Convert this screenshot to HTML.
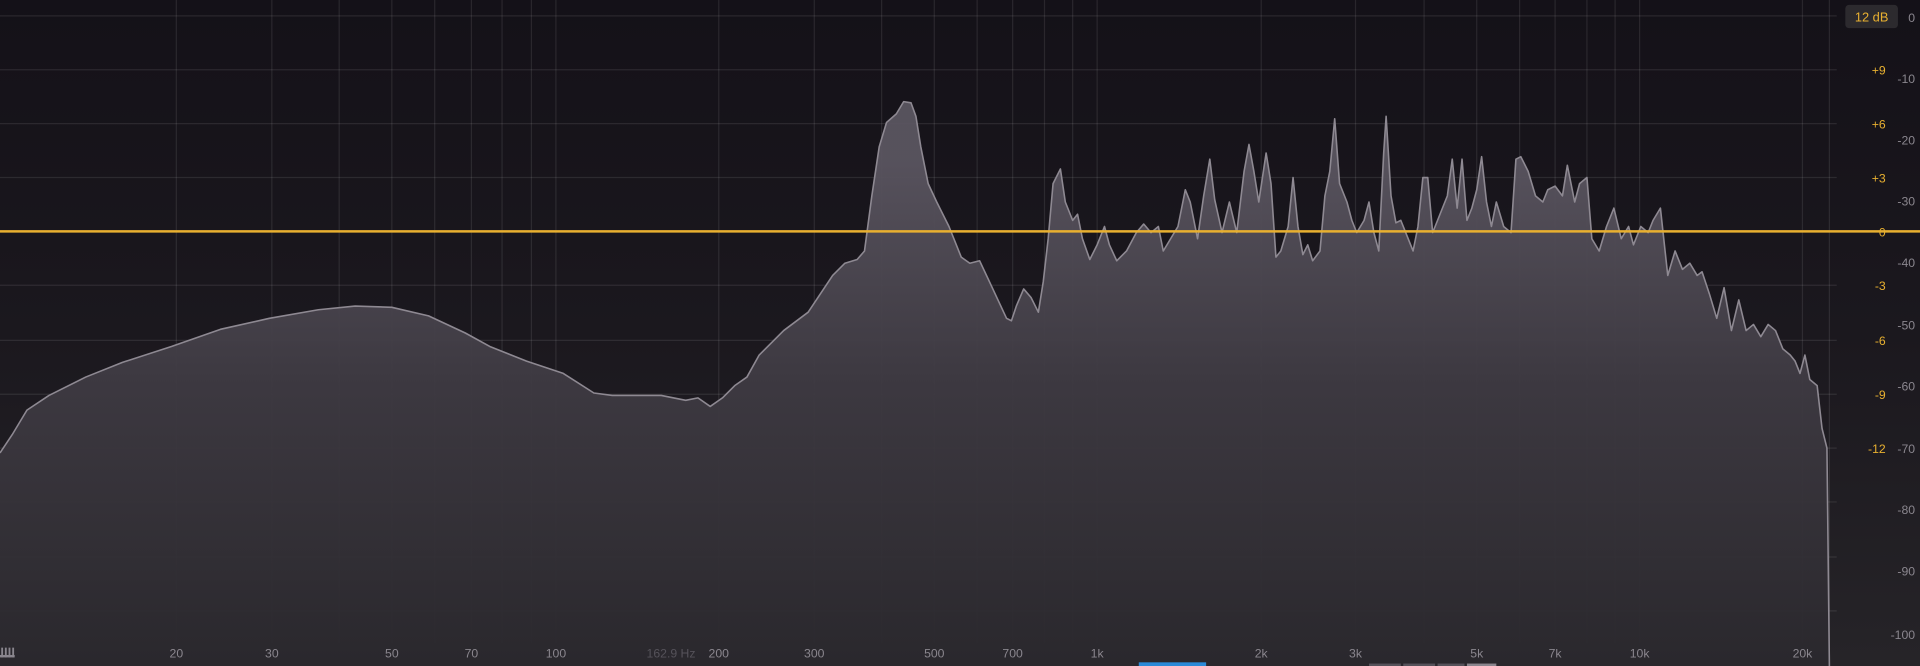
<!DOCTYPE html>
<html><head><meta charset="utf-8"><style>
html,body{margin:0;padding:0;background:#141117;overflow:hidden}
svg{display:block}
text{font-family:"Liberation Sans",sans-serif}
</style></head><body>
<svg width="1920" height="666" viewBox="0 0 1568 544" preserveAspectRatio="none">
<defs>
<linearGradient id="bg" x1="0" y1="0" x2="0" y2="1">
<stop offset="0" stop-color="#141118"/><stop offset="0.5" stop-color="#1b181e"/><stop offset="1" stop-color="#262428"/>
</linearGradient>
<linearGradient id="fl" x1="0" y1="0" x2="0" y2="1">
<stop offset="0.1" stop-color="#5a5560"/><stop offset="0.5" stop-color="#3e3a42"/><stop offset="1" stop-color="#2a282d"/>
</linearGradient>
</defs>
<rect width="1568" height="544" fill="url(#bg)"/>
<g stroke="#ffffff" stroke-opacity="0.09" stroke-width="1">
<line x1="0" y1="13" x2="1500" y2="13"/><line x1="0" y1="57" x2="1500" y2="57"/><line x1="0" y1="101" x2="1500" y2="101"/><line x1="0" y1="145" x2="1500" y2="145"/><line x1="0" y1="233" x2="1500" y2="233"/><line x1="0" y1="278" x2="1500" y2="278"/><line x1="0" y1="322" x2="1500" y2="322"/><line x1="0" y1="366" x2="1500" y2="366"/><line x1="0" y1="410" x2="1500" y2="410"/><line x1="0" y1="455" x2="1500" y2="455"/><line x1="0" y1="499" x2="1500" y2="499"/>
<line x1="144" y1="0" x2="144" y2="525"/><line x1="222" y1="0" x2="222" y2="525"/><line x1="277" y1="0" x2="277" y2="525"/><line x1="320" y1="0" x2="320" y2="525"/><line x1="355" y1="0" x2="355" y2="525"/><line x1="385" y1="0" x2="385" y2="525"/><line x1="410" y1="0" x2="410" y2="525"/><line x1="434" y1="0" x2="434" y2="525"/><line x1="454" y1="0" x2="454" y2="525"/>
<line x1="587" y1="0" x2="587" y2="525"/><line x1="665" y1="0" x2="665" y2="525"/><line x1="720" y1="0" x2="720" y2="525"/><line x1="763" y1="0" x2="763" y2="525"/><line x1="798" y1="0" x2="798" y2="525"/><line x1="827" y1="0" x2="827" y2="525"/><line x1="853" y1="0" x2="853" y2="525"/><line x1="876" y1="0" x2="876" y2="525"/><line x1="896" y1="0" x2="896" y2="525"/>
<line x1="1030" y1="0" x2="1030" y2="525"/><line x1="1107" y1="0" x2="1107" y2="525"/><line x1="1163" y1="0" x2="1163" y2="525"/><line x1="1206" y1="0" x2="1206" y2="525"/><line x1="1241" y1="0" x2="1241" y2="525"/><line x1="1270" y1="0" x2="1270" y2="525"/><line x1="1296" y1="0" x2="1296" y2="525"/><line x1="1319" y1="0" x2="1319" y2="525"/><line x1="1339" y1="0" x2="1339" y2="525"/>
<line x1="1472" y1="0" x2="1472" y2="525"/><line x1="1494" y1="0" x2="1494" y2="544"/>
</g>
<polygon fill="url(#fl)" fill-opacity="0.95" points="0,544 0,370 10,355 22,335 40,323 70,308 100,296 140,283 180,269 220,260 260,253 290,250 320,251 350,258 380,272 400,283 430,295 460,305 485,321 500,323 540,323 560,327 570,325 580,332 590,325 600,315 610,308 620,290 640,270 660,255 670,240 680,225 690,215 700,212 706,205 712,160 718,120 724,100 732,93 738,83 744,84 748,95 752,120 758,150 765,165 775,185 785,210 792,215 800,213 808,230 815,245 822,260 826,262 830,250 836,236 842,243 848,255 852,230 856,195 860,150 866,138 870,165 876,180 880,175 884,195 890,212 896,200 902,185 906,200 912,213 920,205 928,190 934,183 940,190 946,185 950,205 956,195 962,185 968,155 972,165 978,195 983,160 988,130 992,163 998,190 1004,165 1010,190 1016,140 1020,118 1024,140 1028,165 1034,125 1038,150 1042,210 1046,205 1052,185 1056,145 1060,185 1064,208 1068,200 1072,213 1078,205 1082,160 1086,140 1090,97 1094,150 1100,165 1104,180 1108,190 1114,180 1118,165 1122,190 1126,205 1130,125 1132,95 1136,160 1140,182 1144,180 1150,195 1154,205 1158,185 1162,145 1166,145 1170,190 1174,180 1178,170 1182,160 1186,130 1190,170 1194,130 1198,180 1202,170 1206,155 1210,128 1214,165 1218,185 1222,165 1228,185 1234,190 1238,130 1242,128 1248,140 1254,160 1260,165 1264,155 1270,152 1276,160 1280,135 1286,165 1290,150 1296,145 1300,195 1306,205 1312,185 1318,170 1324,195 1330,185 1334,200 1340,185 1346,190 1350,180 1356,170 1362,225 1368,205 1374,220 1380,215 1386,225 1390,222 1396,240 1402,260 1408,235 1414,270 1420,245 1426,270 1432,265 1438,275 1444,265 1450,270 1456,285 1462,290 1466,295 1470,305 1474,290 1478,310 1484,315 1488,350 1492,366 1494,544"/>
<polyline fill="none" stroke="#8e8992" stroke-width="1.3" stroke-linejoin="round" points="0,370 10,355 22,335 40,323 70,308 100,296 140,283 180,269 220,260 260,253 290,250 320,251 350,258 380,272 400,283 430,295 460,305 485,321 500,323 540,323 560,327 570,325 580,332 590,325 600,315 610,308 620,290 640,270 660,255 670,240 680,225 690,215 700,212 706,205 712,160 718,120 724,100 732,93 738,83 744,84 748,95 752,120 758,150 765,165 775,185 785,210 792,215 800,213 808,230 815,245 822,260 826,262 830,250 836,236 842,243 848,255 852,230 856,195 860,150 866,138 870,165 876,180 880,175 884,195 890,212 896,200 902,185 906,200 912,213 920,205 928,190 934,183 940,190 946,185 950,205 956,195 962,185 968,155 972,165 978,195 983,160 988,130 992,163 998,190 1004,165 1010,190 1016,140 1020,118 1024,140 1028,165 1034,125 1038,150 1042,210 1046,205 1052,185 1056,145 1060,185 1064,208 1068,200 1072,213 1078,205 1082,160 1086,140 1090,97 1094,150 1100,165 1104,180 1108,190 1114,180 1118,165 1122,190 1126,205 1130,125 1132,95 1136,160 1140,182 1144,180 1150,195 1154,205 1158,185 1162,145 1166,145 1170,190 1174,180 1178,170 1182,160 1186,130 1190,170 1194,130 1198,180 1202,170 1206,155 1210,128 1214,165 1218,185 1222,165 1228,185 1234,190 1238,130 1242,128 1248,140 1254,160 1260,165 1264,155 1270,152 1276,160 1280,135 1286,165 1290,150 1296,145 1300,195 1306,205 1312,185 1318,170 1324,195 1330,185 1334,200 1340,185 1346,190 1350,180 1356,170 1362,225 1368,205 1374,220 1380,215 1386,225 1390,222 1396,240 1402,260 1408,235 1414,270 1420,245 1426,270 1432,265 1438,275 1444,265 1450,270 1456,285 1462,290 1466,295 1470,305 1474,290 1478,310 1484,315 1488,350 1492,366 1494,544"/>
<line x1="0" y1="189" x2="1568" y2="189" stroke="#e8b030" stroke-width="2"/>
<rect x="1507" y="4" width="43" height="19" rx="3" fill="#2c2a2e"/>
<text x="1528.5" y="17.5" font-size="10.5" fill="#e8b030" text-anchor="middle">12 dB</text>
<g font-size="10" fill="#e8b030" text-anchor="end">
<text x="1540" y="61">+9</text><text x="1540" y="105">+6</text><text x="1540" y="149">+3</text><text x="1540" y="193">0</text><text x="1540" y="237">-3</text><text x="1540" y="282">-6</text><text x="1540" y="326">-9</text><text x="1540" y="370">-12</text>
</g>
<g font-size="10" fill="#8a868e" text-anchor="end">
<text x="1564" y="18">0</text><text x="1564" y="68">-10</text><text x="1564" y="118">-20</text><text x="1564" y="168">-30</text><text x="1564" y="218">-40</text><text x="1564" y="269">-50</text><text x="1564" y="319">-60</text><text x="1564" y="370">-70</text><text x="1564" y="420">-80</text><text x="1564" y="470">-90</text><text x="1564" y="522">-100</text>
</g>
<g font-size="10" fill="#8a868e" text-anchor="middle">
<text x="144" y="537">20</text><text x="222" y="537">30</text><text x="320" y="537">50</text><text x="385" y="537">70</text><text x="454" y="537">100</text><text x="587" y="537">200</text><text x="665" y="537">300</text><text x="763" y="537">500</text><text x="827" y="537">700</text><text x="896" y="537">1k</text><text x="1030" y="537">2k</text><text x="1107" y="537">3k</text><text x="1206" y="537">5k</text><text x="1270" y="537">7k</text><text x="1339" y="537">10k</text><text x="1472" y="537">20k</text>
<text x="548" y="537" fill="#55525a">162.9 Hz</text>
</g>
<g fill="#8a868e"><rect x="1" y="529" width="1.5" height="8"/><rect x="4" y="529" width="1.5" height="8"/><rect x="7" y="529" width="1.5" height="8"/><rect x="10" y="529" width="1.5" height="8"/><rect x="0" y="535" width="12" height="2"/></g>
<rect x="930" y="541" width="55" height="3" fill="#2a8ad8"/>
<rect x="1118" y="542" width="26" height="2" fill="#55525a"/><rect x="1146" y="542" width="26" height="2" fill="#55525a"/><rect x="1174" y="542" width="22" height="2" fill="#55525a"/><rect x="1198" y="542" width="24" height="2" fill="#8a868e"/>
</svg>
</body></html>
